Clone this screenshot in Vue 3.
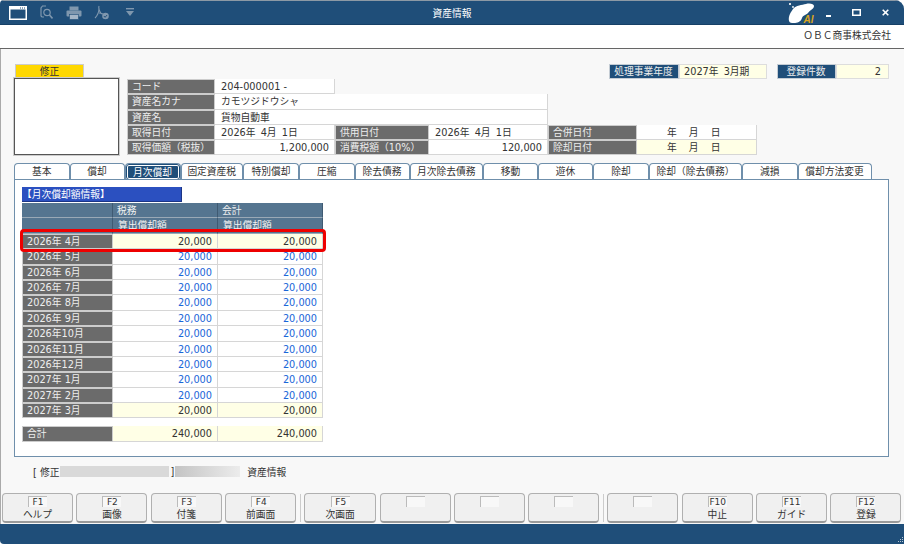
<script setup>
const tabs = [
  { label: '基本', w: 55.5 },
  { label: '償却', w: 55 },
  { label: '月次償却', w: 56 },
  { label: '固定資産税', w: 62.5 },
  { label: '特別償却', w: 56 },
  { label: '圧縮', w: 55.5 },
  { label: '除去債務', w: 55 },
  { label: '月次除去債務', w: 73.5 },
  { label: '移動', w: 55 },
  { label: '遊休', w: 55 },
  { label: '除却', w: 56 },
  { label: '除却（除去債務）', w: 93 },
  { label: '減損', w: 55.5 },
  { label: '償却方法変更', w: 74 }
]
tabs[2].active = true

const months = [
  { label: '2026年 4月', fixed: true },
  { label: '2026年 5月' },
  { label: '2026年 6月' },
  { label: '2026年 7月' },
  { label: '2026年 8月' },
  { label: '2026年 9月' },
  { label: '2026年10月' },
  { label: '2026年11月' },
  { label: '2026年12月' },
  { label: '2027年 1月' },
  { label: '2027年 2月' },
  { label: '2027年 3月', fixed: true }
]

const keysLeft = [
  { key: 'F1', label: 'ヘルプ' },
  { key: 'F2', label: '画像' },
  { key: 'F3', label: '付箋' },
  { key: 'F4', label: '前画面' }
]
const keysMiddle = [
  { key: 'F5', label: '次画面', wide: true },
  { key: '', label: '' },
  { key: '', label: '' },
  { key: '', label: '' }
]
const keysRight = [
  { key: '', label: '' },
  { key: 'F10', label: '中止' },
  { key: 'F11', label: 'ガイド' },
  { key: 'F12', label: '登録' }
]
</script>

<template>
  <div class="window">
    <header class="titlebar">
      <div class="tools">
        <svg class="tool" width="18" height="14" viewBox="0 0 18 14">
          <rect x="0.75" y="0.75" width="16.5" height="12.5" fill="#1f4e79" stroke="#fff" stroke-width="1.5" />
          <rect x="1" y="1" width="16" height="2.5" fill="#fff" />
          <path d="M11 2h1M13 2h1M15 2h1" stroke="#1f4e79" />
        </svg>
        <svg class="tool tool-search" width="13" height="15" viewBox="0 0 13 15" fill="none" stroke="#7f97ae" stroke-width="1.2">
          <path d="M6 1H2.5L1 3v8l1 1h2" />
          <circle cx="7" cy="7.5" r="3.2" />
          <path d="M9.5 10l3 3.5" stroke-width="1.6" />
        </svg>
        <svg class="tool tool-print" width="16" height="14" viewBox="0 0 16 14">
          <rect x="3.5" y="0.5" width="9" height="4" fill="#7f97ae" />
          <rect x="0.5" y="4.5" width="15" height="6" rx="1" fill="#7f97ae" />
          <rect x="3.5" y="8.5" width="9" height="5" fill="#a4b5c6" stroke="#1f4e79" stroke-width="0.6" />
        </svg>
        <svg class="tool tool-pdf" width="15" height="15" viewBox="0 0 15 15" fill="none">
          <path d="M5 1c-1 3 1 6 2.5 8M5 3c0 4-2 8-4 10M5 8c2 0 3 .5 4 1" stroke="#7f97ae" stroke-width="1.1" />
          <circle cx="11.5" cy="11" r="3.3" fill="#7f97ae" />
          <path d="M9.8 11l1.3 1.3 2-2.3" stroke="#1f4e79" stroke-width="1" />
        </svg>
        <svg class="tool tool-drop" width="8" height="8" viewBox="0 0 8 8">
          <rect x="0" y="0" width="8" height="1.4" fill="#7f97ae" />
          <path d="M0 3h8L4 8z" fill="#7f97ae" />
        </svg>
      </div>
      <div class="title">資産情報</div>
      <div class="controls">
        <svg class="ai-logo" width="28" height="21" viewBox="0 0 28 21">
          <path d="M1 19C0 14 3 10 5 7C8 3 14 3 18 2C22 1 26 2 26 4C26 7 22 8 20 11C18 13 15 13 14 16C13 20 9 21 6 21C3 21 2 21 1 19z" fill="#fff" />
          <circle cx="2" cy="2" r="1.1" fill="#fff" />
          <circle cx="5" cy="5" r="0.9" fill="#fff" />
          <text x="15.5" y="20.5" class="ai-text">AI</text>
        </svg>
        <svg class="win-btn win-min" width="5" height="2" viewBox="0 0 5 2"><rect width="5" height="2" fill="#fff" /></svg>
        <svg class="win-btn win-max" width="9" height="7" viewBox="0 0 9 7"><rect x="0.75" y="0.75" width="7.5" height="5.5" fill="none" stroke="#fff" stroke-width="1.5" /></svg>
        <svg class="win-btn win-close" width="7" height="7" viewBox="0 0 7 7"><path d="M.7.7l5.6 5.6M6.3.7L.7 6.3" stroke="#fff" stroke-width="1.6" /></svg>
      </div>
    </header>

    <div class="company">ＯＢＣ商事株式会社</div>

    <main class="body">
      <div class="top-row">
        <div class="mode">修正</div>
        <div class="summary">
          <div class="lbl lbl-blue lbl-year">処理事業年度</div>
          <div class="val val-yellow val-year spaced">2027年 3月期</div>
          <div class="lbl lbl-blue lbl-count">登録件数</div>
          <div class="val val-yellow val-count num">2</div>
        </div>
      </div>

      <div class="asset-row">
        <div class="photo"></div>
        <div class="info">
          <div class="lbl">コード</div>
          <div class="val">204-000001 -</div>
          <div class="lbl col-start">資産名カナ</div>
          <div class="val span-3">カモツジドウシャ</div>
          <div class="lbl col-start">資産名</div>
          <div class="val span-3">貨物自動車</div>
          <div class="lbl col-start">取得日付</div>
          <div class="val spaced">2026年 4月 1日</div>
          <div class="lbl">供用日付</div>
          <div class="val spaced">2026年 4月 1日</div>
          <div class="lbl">合併日付</div>
          <div class="val date">年 月 日</div>
          <div class="lbl col-start">取得価額（税抜）</div>
          <div class="val num">1,200,000</div>
          <div class="lbl">消費税額（10%）</div>
          <div class="val num">120,000</div>
          <div class="lbl">除却日付</div>
          <div class="val val-yellow date">年 月 日</div>
        </div>
      </div>

      <nav class="tabs">
        <div
          v-for="tab in tabs"
          :key="tab.label"
          class="tab"
          :class="{ active: tab.active }"
          :style="{ width: tab.w + 'px' }"
        >
          <span>{{ tab.label }}</span>
        </div>
      </nav>

      <section class="panel">
        <h2 class="section-title">【月次償却額情報】</h2>
        <div class="ledger">
          <div class="head"></div>
          <div class="head">税務</div>
          <div class="head">会計</div>
          <div class="head"></div>
          <div class="head indent">算出償却額</div>
          <div class="head indent">算出償却額</div>

          <template v-for="m in months" :key="m.label">
            <div class="lbl">{{ m.label }}</div>
            <div class="val num" :class="m.fixed ? 'val-yellow' : 'amount'">20,000</div>
            <div class="val num" :class="m.fixed ? 'val-yellow' : 'amount'">20,000</div>
          </template>

          <div class="spacer"></div>
          <div class="lbl">合計</div>
          <div class="val val-yellow num">240,000</div>
          <div class="val val-yellow num">240,000</div>

          <div class="highlight"></div>
        </div>
      </section>

      <div class="status">
        <span class="status-mode">[ 修正</span>
        <span class="mask mask-user"></span>
        <span class="status-close">]</span>
        <span class="mask mask-fade"></span>
        <span class="status-name">資産情報</span>
      </div>

      <div class="fkeys">
        <button v-for="k in keysLeft" :key="k.key" class="fkey">
          <span class="fkey-no">{{ k.key }}</span>
          <span class="fkey-label">{{ k.label }}</span>
        </button>
        <span class="fkey-sep"></span>
        <button v-for="(k, i) in keysMiddle" :key="'m' + i" class="fkey" :class="{ wide: k.wide }">
          <span class="fkey-no">{{ k.key }}</span>
          <span class="fkey-label">{{ k.label }}</span>
        </button>
        <span class="fkey-sep"></span>
        <button v-for="(k, i) in keysRight" :key="'r' + i" class="fkey">
          <span class="fkey-no">{{ k.key }}</span>
          <span class="fkey-label">{{ k.label }}</span>
        </button>
      </div>
    </main>

    <footer class="footer">
      <svg class="grip" width="8" height="8" viewBox="0 0 8 8">
        <path d="M6 1h1v1H6zM4 3h1v1H4zM6 3h1v1H6zM2 5h1v1H2zM4 5h1v1H4zM6 5h1v1H6z" fill="#b8c6d3" />
      </svg>
    </footer>
  </div>
</template>

<style>
html, body {
  margin: 0;
  background: #fff;
}
</style>

<style scoped>
.window {
  width: 904px;
  height: 544px;
  box-sizing: border-box;
  display: flex;
  flex-direction: column;
  font-family: "DejaVu Sans", "Noto Sans CJK JP", sans-serif;
  font-size: 9.75px;
  color: #333;
  background: #f8f8f8;
  overflow: hidden;
  border-radius: 4px 9px 0 4px;
}
.titlebar {
  height: 25px;
  box-sizing: border-box;
  flex: none;
  display: flex;
  align-items: center;
  position: relative;
  background: #1f4e79;
  color: #fff;
  border-top: 1px solid #8c99a5;
  border-bottom: 1px solid #164066;
}
.tools {
  display: flex;
  align-items: center;
  padding-left: 9px;
}
.tool-search { margin-left: 13px; }
.tool-print { margin-left: 13px; }
.tool-pdf { margin-left: 12px; }
.tool-drop { margin-left: 17px; margin-top: -2px; }
.title {
  position: absolute;
  left: 0;
  right: 0;
  text-align: center;
  pointer-events: none;
}
.controls {
  margin-left: auto;
  display: flex;
  align-items: center;
  padding-right: 15px;
}
.ai-text {
  font: italic bold 10px "Liberation Sans", sans-serif;
  fill: #d9a520;
}
.win-min { margin-left: 10px; margin-top: 6px; }
.win-max { margin-left: 21px; }
.win-close { margin-left: 21px; }
.company {
  height: 24px;
  box-sizing: border-box;
  flex: none;
  background: #fff;
  border-bottom: 1px solid #666;
  text-align: right;
  line-height: 22px;
  padding-right: 13px;
}
.body {
  flex: 1;
  min-height: 0;
  padding: 15px 2px 0 13px;
  display: flex;
  flex-direction: column;
  border-left: 1px solid #aaa;
  box-sizing: border-box;
}
.top-row {
  display: flex;
  justify-content: space-between;
  height: 15px;
}
.mode {
  width: 69px;
  margin-left: 1px;
  height: 14px;
  line-height: 14px;
  text-align: center;
  background: #ffd800;
  border: 1px solid #ccc;
  border-bottom: 0;
  box-sizing: border-box;
}
.summary {
  display: flex;
  padding-right: 13px;
}
.lbl,
.val {
  height: 100%;
  box-sizing: border-box;
  line-height: 15px;
  white-space: nowrap;
  overflow: hidden;
}
.lbl {
  background: #6b6b6b;
  color: #eee;
  padding-left: 5px;
  border-right: 1px solid #4d4d4d;
  border-bottom: 1px solid #4d4d4d;
  outline: 1px solid #ccc;
  outline-offset: -1px;
}
.val {
  background: #fff;
  padding: 0 5px 0 6px;
  border-right: 1px solid #d6d6d6;
  border-bottom: 1px solid #d6d6d6;
}
.num { text-align: right; }
.spaced { word-spacing: 2px; }
.date {
  padding-left: 30px;
  word-spacing: 9px;
}
.lbl-blue {
  background: #1f4e79;
  border-color: #173b5c;
  outline: 1px solid #c4ccd4;
  text-align: center;
  padding: 0;
}
.val-yellow { background: #ffffe6; }
.lbl-year { width: 70px; }
.val-year { width: 88px; padding-left: 5px; outline: 1px solid #ddd; outline-offset: -1px; }
.lbl-count { width: 59px; margin-left: 10px; }
.val-count { width: 53px; outline: 1px solid #ddd; outline-offset: -1px; padding-right: 7px; }
.asset-row {
  display: flex;
  height: 77px;
  gap: 8px;
}
.photo {
  width: 105px;
  height: 77px;
  margin-top: -1px;
  box-sizing: border-box;
  background: #fff;
  border: 1px solid #555;
  outline: 1px solid #ccc;
}
.info {
  display: grid;
  grid-template-columns: 88px 120px 94px 119px 89px 120px;
  grid-template-rows: repeat(5, 15.3px);
}
.col-start { grid-column: 1; }
.span-3 { grid-column: span 3; }
.tabs {
  display: flex;
  height: 16px;
  margin-top: 7px;
  flex: none;
}
.tab {
  box-sizing: border-box;
  height: 16px;
  padding: 1px;
  background: #fff;
  border: 1px solid #6f8fab;
  border-bottom: 0;
  border-radius: 4px 4px 0 0;
  text-align: center;
  flex: none;
}
.tab span {
  display: block;
  height: 14px;
  line-height: 13px;
}
.tab.active span {
  background: #1f4e79;
  color: #fff;
  border: 1px solid #fff;
  outline: 1px solid #1f4e79;
  box-sizing: border-box;
  border-radius: 2px;
}
.panel {
  width: 875px;
  height: 278px;
  flex: none;
  box-sizing: border-box;
  background: #fff;
  border: 1px solid #6f8fab;
  padding: 7px 7px;
}
.section-title {
  margin: 0 0 1px;
  width: 160px;
  height: 15px;
  box-sizing: border-box;
  font-size: 9.75px;
  font-weight: normal;
  line-height: 15px;
  color: #fff;
  background: #2b50c0;
  border-right: 1px solid #1c3585;
  border-bottom: 1px solid #1c3585;
}
.ledger {
  position: relative;
  display: grid;
  grid-template-columns: 91px 105px 105px;
  grid-template-rows: repeat(14, 15.4px) 8px 15.4px;
  width: 301px;
}
.head {
  background: #557590;
  color: #f2f2f2;
  padding-left: 4px;
  line-height: 15px;
  box-sizing: border-box;
  border-right: 1px solid #3f5a72;
  border-bottom: 1px solid #9aa9b6;
  overflow: hidden;
}
.indent { padding-left: 5px; }
.amount { color: #1a66d8; }
.spacer { grid-column: 1 / -1; }
.highlight {
  position: absolute;
  left: -2px;
  top: 26px;
  width: 306px;
  height: 23px;
  box-sizing: border-box;
  border: 3px solid #ee0000;
  border-radius: 4px;
}
.status {
  display: flex;
  align-items: center;
  height: 11px;
  margin-top: 9px;
  padding-left: 19px;
  flex: none;
}
.mask {
  height: 11px;
}
.mask-user {
  width: 109px;
  margin-left: 1px;
  background: #d9d9d9;
}
.mask-fade {
  width: 65px;
  margin-left: 1px;
  background: linear-gradient(90deg, #c4c4c4, #ececec);
}
.status-close { margin-left: 1px; }
.status-name { margin-left: 7px; }
.fkeys {
  display: flex;
  margin-top: 16px;
  margin-left: -12px;
  height: 30px;
  flex: none;
  align-items: stretch;
}
.fkey {
  width: 71px;
  flex: none;
  margin-right: 3.4px;
  padding: 0;
  box-sizing: border-box;
  font: inherit;
  color: #333;
  background: #f0f0f0;
  border: 1px solid #b0b0b0;
  border-bottom: 2px solid #9a9a9a;
  border-radius: 4px;
  display: flex;
  flex-direction: column;
  align-items: center;
}
.fkey.wide { width: 72px; }
.fkey-no {
  min-width: 18px;
  height: 10px;
  line-height: 10px;
  font-size: 9px;
  margin-top: 2px;
  text-align: center;
  border-top: 1px solid #bbb;
  border-left: 1px solid #bbb;
  background: #f8f8f8;
  box-sizing: content-box;
}
.fkey-label {
  margin-top: 1px;
  line-height: 13px;
}
.fkey-sep {
  flex: none;
  width: 1px;
  margin: 1px 3.6px 1px 0;
  background: #ccc;
}
.footer {
  height: 20px;
  flex: none;
  background: #1f4e79;
  display: flex;
  justify-content: flex-end;
  align-items: flex-end;
}
.grip {
  display: block;
}
</style>
